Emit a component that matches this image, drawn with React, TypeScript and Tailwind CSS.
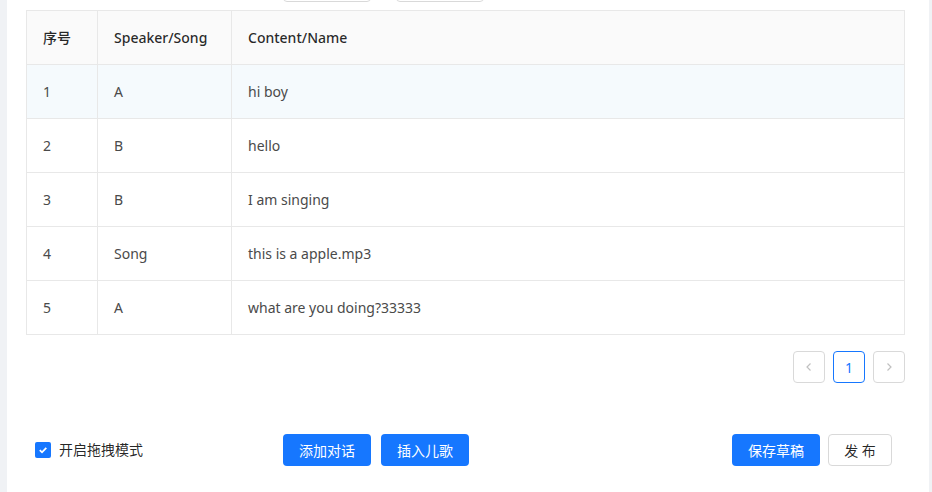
import React from "react";

const rows = [
  { id: 1, speaker: "A", content: "hi boy" },
  { id: 2, speaker: "B", content: "hello" },
  { id: 3, speaker: "B", content: "I am singing" },
  { id: 4, speaker: "Song", content: "this is a apple.mp3" },
  { id: 5, speaker: "A", content: "what are you doing?33333" },
];

const font = { fontFamily: '"Noto Sans", "Noto Sans CJK SC", sans-serif' };

const App = () => {
  return (
    <div className="w-[932px] h-[492px] overflow-hidden bg-[#f0f2f5] text-[14px] text-[rgba(0,0,0,0.85)]" style={font}>
      <div className="ml-[7px] w-[922px] h-full bg-white">
        {/* toolbar scrolled mostly out of view */}
        <div className="h-[10px] flex items-end">
          <div className="flex gap-[25px] ml-[276px] mb-[8px]">
            <div className="w-[88px] h-[32px] border border-[#d9d9d9] rounded-[4px]" />
            <div className="w-[88px] h-[32px] border border-[#d9d9d9] rounded-[4px]" />
          </div>
        </div>

        <div className="pl-[19px] pr-[24px]">
          <table className="w-full border-collapse border border-[#e8e8e8]">
            <thead>
              <tr className="h-[54px] bg-[#fafafa]">
                <th className="w-[71px] px-4 text-left font-medium border border-[#e8e8e8]">序号</th>
                <th className="w-[134px] px-4 text-left font-medium border border-[#e8e8e8]">Speaker/Song</th>
                <th className="px-4 text-left font-medium border border-[#e8e8e8]">Content/Name</th>
              </tr>
            </thead>
            <tbody>
              {rows.map((r) => (
                <tr key={r.id} className={"h-[54px] " + (r.id === 1 ? "bg-[#f5fafd]" : "bg-white")}>
                  <td className="px-4 border border-[#e8e8e8] text-[#4a4a4a]">{r.id}</td>
                  <td className="px-4 border border-[#e8e8e8] text-[#4a4a4a]">{r.speaker}</td>
                  <td className="px-4 border border-[#e8e8e8] text-[#4a4a4a]">{r.content}</td>
                </tr>
              ))}
            </tbody>
          </table>

          <div className="flex justify-end gap-2 mt-4">
            <div className="w-8 h-8 flex items-center justify-center border border-[#d9d9d9] rounded-[4px] text-[#c0c0c0]">
              <svg width="10" height="10" viewBox="0 0 10 10" fill="none" stroke="currentColor" strokeWidth="1.2">
                <path d="M6.5 1.5 3 5l3.5 3.5" />
              </svg>
            </div>
            <div className="w-8 h-8 flex items-center justify-center border border-[#1677ff] rounded-[4px] text-[#1677ff]">1</div>
            <div className="w-8 h-8 flex items-center justify-center border border-[#d9d9d9] rounded-[4px] text-[#c0c0c0]">
              <svg width="10" height="10" viewBox="0 0 10 10" fill="none" stroke="currentColor" strokeWidth="1.2">
                <path d="M3.5 1.5 7 5 3.5 8.5" />
              </svg>
            </div>
          </div>
        </div>

        <div className="flex items-center mt-[51px] pl-[28px] pr-[37px]">
          <div className="w-[248px] flex items-center gap-2">
            <span className="w-4 h-4 rounded-[2px] bg-[#1677ff] flex items-center justify-center">
              <svg width="10" height="10" viewBox="0 0 10 10" fill="none" stroke="white" strokeWidth="1.8">
                <path d="M1.8 5.2 4 7.3 8.3 2.8" />
              </svg>
            </span>
            <span className="text-[rgba(0,0,0,0.85)] leading-4">开启拖拽模式</span>
          </div>
          <div className="flex gap-[10px]">
            <button className="w-[88px] h-8 rounded-[4px] bg-[#1677ff] text-white">添加对话</button>
            <button className="w-[88px] h-8 rounded-[4px] bg-[#1677ff] text-white">插入儿歌</button>
          </div>
          <div className="flex-1" />
          <div className="flex gap-2">
            <button className="w-[88px] h-8 rounded-[4px] bg-[#1677ff] text-white">保存草稿</button>
            <button className="w-[64px] h-8 rounded-[4px] border border-[#d9d9d9] bg-white text-[rgba(0,0,0,0.85)]">发 布</button>
          </div>
        </div>
      </div>
    </div>
  );
};

export default App;
